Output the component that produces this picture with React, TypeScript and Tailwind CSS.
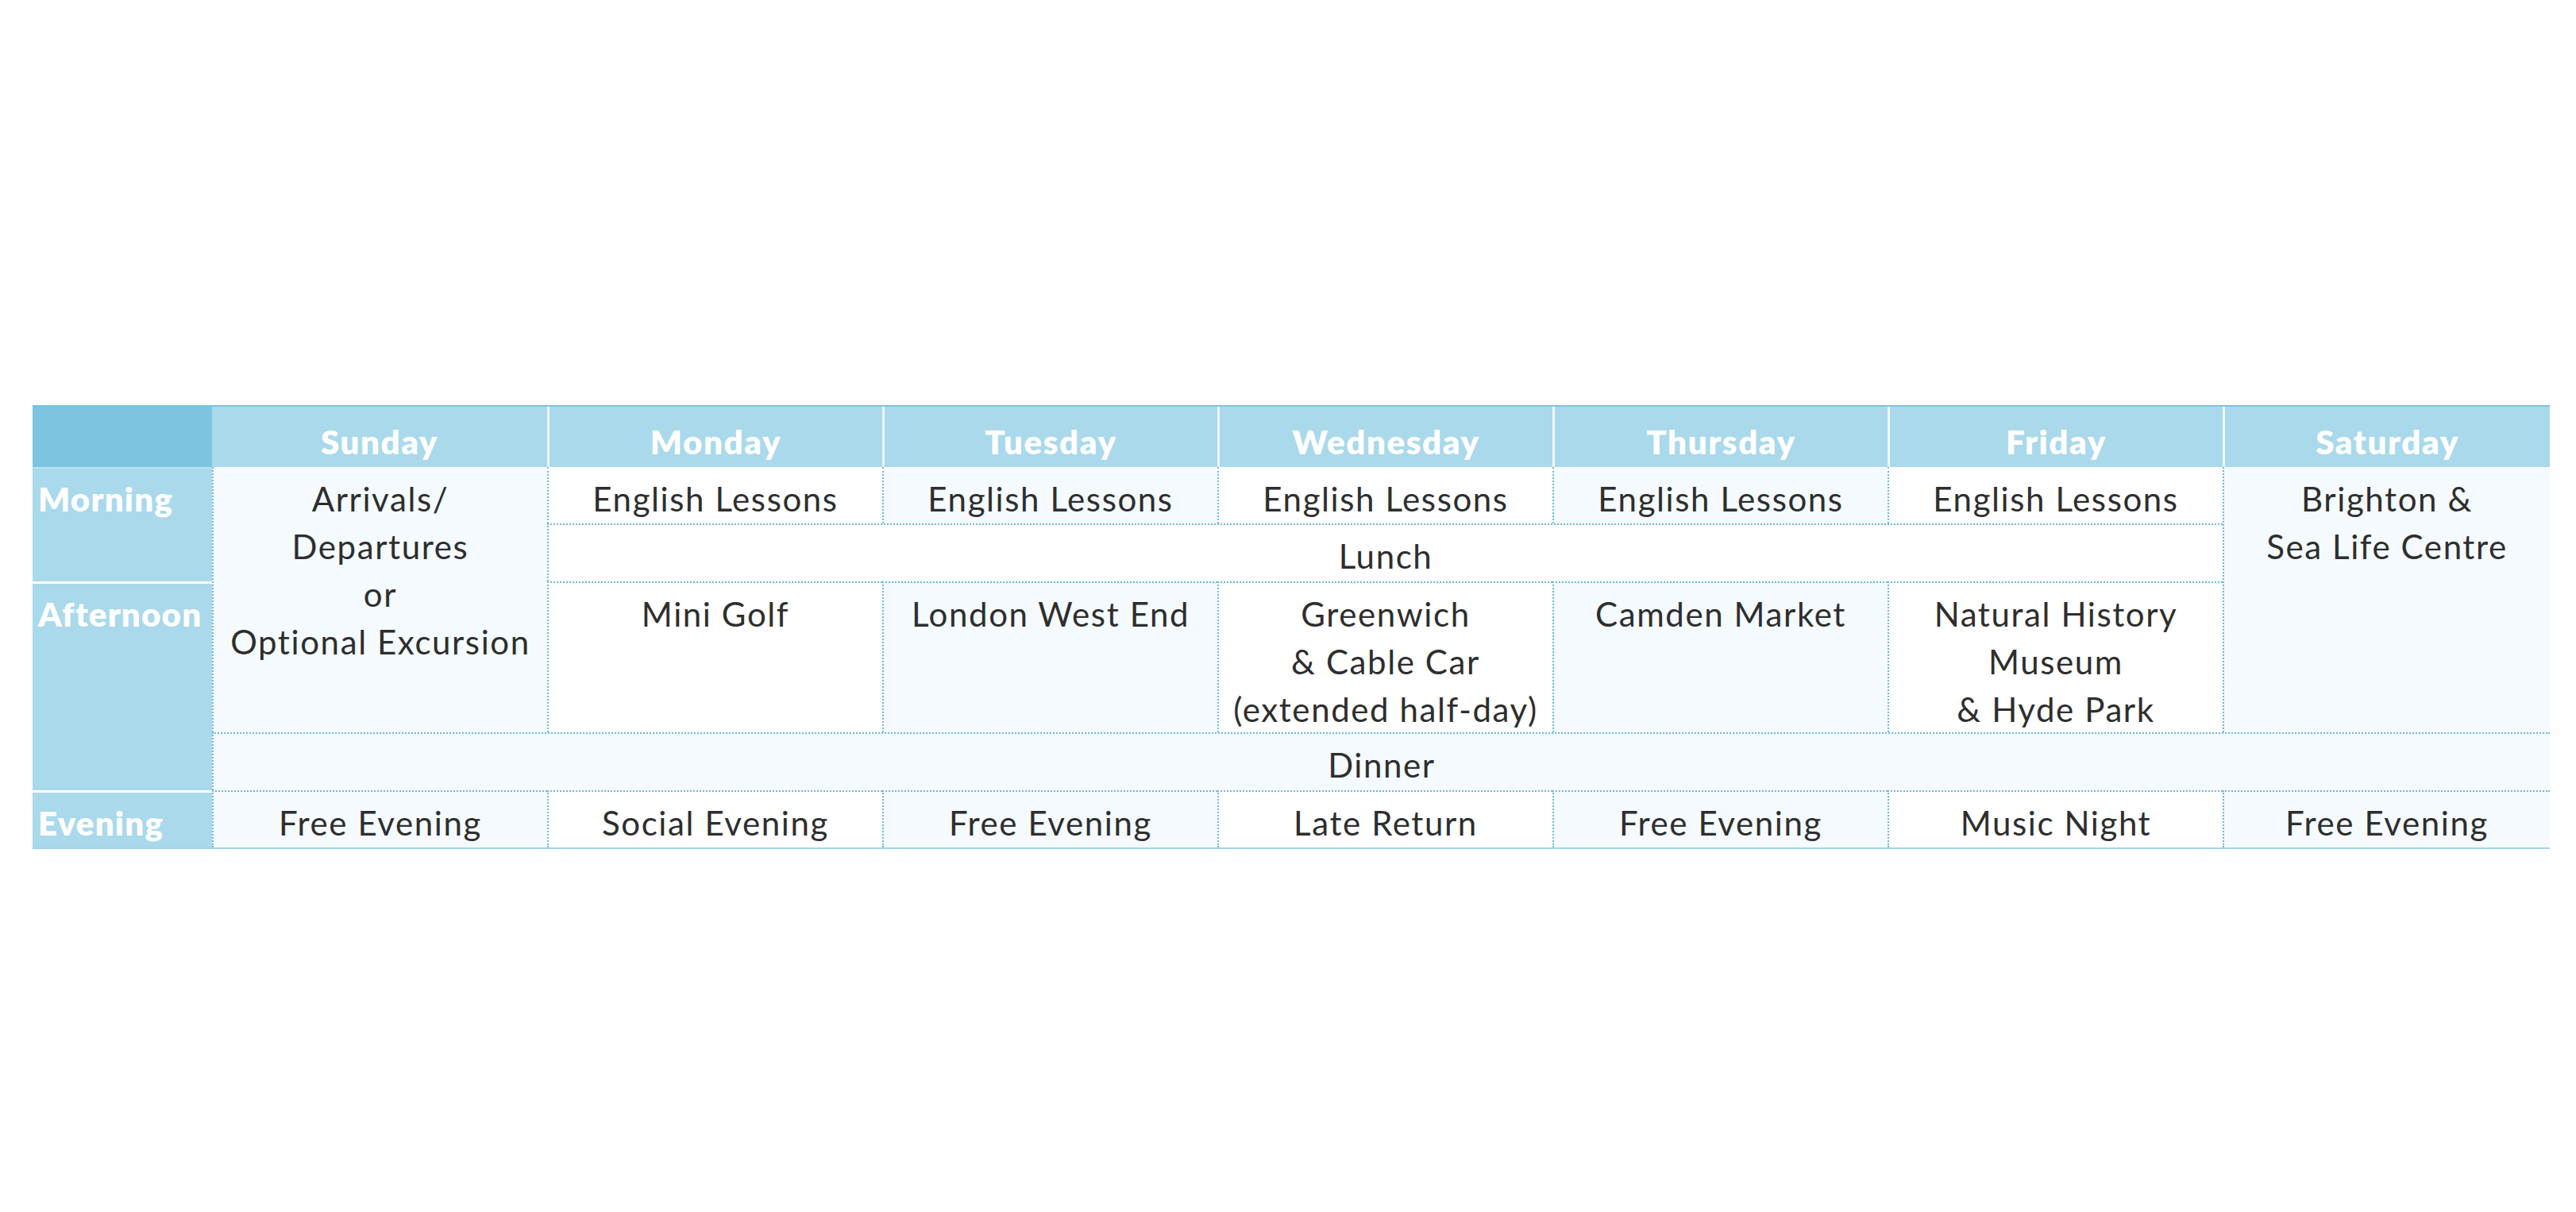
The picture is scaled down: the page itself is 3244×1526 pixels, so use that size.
import React from "react";

const FONT = { fontFamily: "Lato, 'Open Sans', sans-serif" };

const base =
  "border-l-2 border-dotted border-[#6cbad8] text-center pt-[9px] leading-[60px] text-[42px] tracking-[1.6px] text-[#2e2e2e]";
const LIGHT = "bg-[#f4fafd]";
const WHITE = "bg-white";

function Cell({
  className,
  lines,
  top = true,
}: {
  className: string;
  lines: string[];
  top?: boolean;
}) {
  return (
    <div className={`${base} ${top ? "border-t-2" : ""} ${className}`}>
      {lines.map((l, i) => (
        <div key={i} className="whitespace-nowrap">
          {l}
        </div>
      ))}
    </div>
  );
}

const days = ["Sunday", "Monday", "Tuesday", "Wednesday", "Thursday", "Friday", "Saturday"];
const headerCols = [
  "col-start-2",
  "col-start-3",
  "col-start-4",
  "col-start-5",
  "col-start-6",
  "col-start-7",
  "col-start-8",
];

export default function App() {
  return (
    <div className="min-h-[1526px] w-full bg-white pt-[510px] pl-[41px]" style={FONT}>
      <div className="grid w-[3170px] grid-cols-[226px_422px_422px_422px_422px_422px_422px_412px] grid-rows-[76px_71px_73px_190px_73px_72px] border-t-2 border-b-2 border-t-[#7cc4df] border-b-[#a3d6e9]">
        {/* header */}
        <div className="col-start-1 row-start-1 bg-[#7cc5e0]" />
        {days.map((d, i) => (
          <div
            key={d}
            className={`${headerCols[i]} row-start-1 bg-[#a9d9eb] pt-[14px] text-center text-[42px] font-extrabold leading-[60px] tracking-[1.6px] text-white ${
              i > 0 ? "border-l-[3px] border-[#eef8fc]" : ""
            }`}
          >
            {d}
          </div>
        ))}

        {/* labels */}
        <div className="col-start-1 row-start-2 row-span-2 border-t-2 border-[#bce3f1] bg-[#a9d9eb] pl-[7px] pt-[8px] text-[42px] font-extrabold leading-[60px] tracking-[1.2px] text-white">
          Morning
        </div>
        <div className="col-start-1 row-start-4 row-span-2 border-t-[3px] border-white bg-[#a9d9eb] pl-[7px] pt-[8px] text-[42px] font-extrabold leading-[60px] tracking-[1.2px] text-white">
          Afternoon
        </div>
        <div className="col-start-1 row-start-6 border-t-[3px] border-white bg-[#a9d9eb] pl-[7px] pt-[8px] text-[42px] font-extrabold leading-[60px] tracking-[1.2px] text-white">
          Evening
        </div>

        {/* Sunday block */}
        <Cell
          top={false}
          className={`col-start-2 row-start-2 row-span-3 pt-[10px] ${LIGHT}`}
          lines={["Arrivals/", "Departures", "or", "Optional Excursion"]}
        />

        {/* English lessons */}
        <Cell top={false} className={`col-start-3 row-start-2 pt-[10px] ${WHITE}`} lines={["English Lessons"]} />
        <Cell top={false} className={`col-start-4 row-start-2 pt-[10px] ${LIGHT}`} lines={["English Lessons"]} />
        <Cell top={false} className={`col-start-5 row-start-2 pt-[10px] ${WHITE}`} lines={["English Lessons"]} />
        <Cell top={false} className={`col-start-6 row-start-2 pt-[10px] ${LIGHT}`} lines={["English Lessons"]} />
        <Cell top={false} className={`col-start-7 row-start-2 pt-[10px] ${WHITE}`} lines={["English Lessons"]} />

        {/* Saturday block */}
        <Cell
          top={false}
          className={`col-start-8 row-start-2 row-span-3 pt-[10px] ${LIGHT}`}
          lines={["Brighton &", "Sea Life Centre"]}
        />

        {/* Lunch */}
        <Cell className={`col-start-3 col-span-5 row-start-3 ${WHITE}`} lines={["Lunch"]} />

        {/* Afternoon */}
        <Cell className={`col-start-3 row-start-4 ${WHITE}`} lines={["Mini Golf"]} />
        <Cell className={`col-start-4 row-start-4 ${LIGHT}`} lines={["London West End"]} />
        <Cell
          className={`col-start-5 row-start-4 ${WHITE}`}
          lines={["Greenwich", "& Cable Car", "(extended half-day)"]}
        />
        <Cell className={`col-start-6 row-start-4 ${LIGHT}`} lines={["Camden Market"]} />
        <Cell
          className={`col-start-7 row-start-4 ${WHITE}`}
          lines={["Natural History", "Museum", "& Hyde Park"]}
        />

        {/* Dinner */}
        <Cell className={`col-start-2 col-span-7 row-start-5 ${LIGHT}`} lines={["Dinner"]} />

        {/* Evening */}
        <Cell className={`col-start-2 row-start-6 ${LIGHT}`} lines={["Free Evening"]} />
        <Cell className={`col-start-3 row-start-6 ${WHITE}`} lines={["Social Evening"]} />
        <Cell className={`col-start-4 row-start-6 ${LIGHT}`} lines={["Free Evening"]} />
        <Cell className={`col-start-5 row-start-6 ${WHITE}`} lines={["Late Return"]} />
        <Cell className={`col-start-6 row-start-6 ${LIGHT}`} lines={["Free Evening"]} />
        <Cell className={`col-start-7 row-start-6 ${WHITE}`} lines={["Music Night"]} />
        <Cell className={`col-start-8 row-start-6 ${LIGHT}`} lines={["Free Evening"]} />
      </div>
    </div>
  );
}
